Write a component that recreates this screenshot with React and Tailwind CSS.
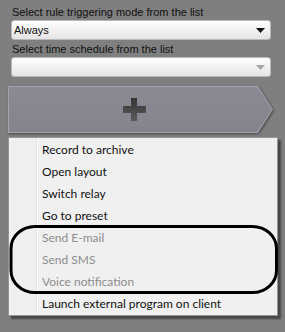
import React from "react";

const items = [
  { label: "Record to archive" },
  { label: "Open layout" },
  { label: "Switch relay" },
  { label: "Go to preset" },
  { label: "Send E-mail", disabled: true },
  { label: "Send SMS", disabled: true },
  { label: "Voice notification", disabled: true },
  { label: "Launch external program on client" },
];

const sans = { fontFamily: '"Liberation Sans", Arial, sans-serif' };

const Combo = ({ value, disabled }) => (
  <div className="mx-[11px] h-[20px] w-[260px] rounded-[3px] border border-[#b9b9b9] bg-gradient-to-b from-[#ffffff] to-[#e4e4e4] flex items-center pl-[2px] pr-[5px]">
    <span className="flex-1 text-[11px] leading-none text-[#111]" style={sans}>
      {value}
    </span>
    <svg width="9" height="5" viewBox="0 0 9 5">
      <polygon points="0,0 9,0 4.5,5" fill={disabled ? "#a8a8a8" : "#111"} />
    </svg>
  </div>
);

const App = () => {
  return (
    <div
      className="relative w-[285px] h-[332px] overflow-hidden bg-[#7f7f7f] pt-[4px]"
      style={{ fontFamily: 'Lato, "Open Sans", sans-serif' }}
    >
      <div className="pl-[12px] h-[16px] text-[11px] leading-[16px] text-[#111]" style={sans}>
        Select rule triggering mode from the list
      </div>
      <Combo value="Always" />
      <div className="mt-[1px] pl-[12px] h-[16px] text-[11px] leading-[16px] text-[#111]" style={sans}>
        Select time schedule from the list
      </div>
      <Combo value="" disabled />

      <div className="mt-[9px] ml-[8px] w-[265px] h-[47px] [filter:drop-shadow(1px_1px_1px_rgba(0,0,0,0.45))]">
        <div className="w-full h-full bg-[#a3a4ab] [clip-path:polygon(0_0,94.3%_0,100%_50%,94.3%_100%,0_100%)] p-[1px]">
          <div className="w-full h-full bg-gradient-to-b from-[#898a93] to-[#83848d] [clip-path:polygon(0_0,94.4%_0,100%_50%,94.4%_100%,0_100%)] flex items-center justify-center pr-[13px]">
            <svg width="23" height="23" viewBox="0 0 23 23">
              <defs>
                <linearGradient id="pl" x1="0" y1="0" x2="0" y2="1">
                  <stop offset="0" stopColor="#333" />
                  <stop offset="1" stopColor="#5c5c5c" />
                </linearGradient>
              </defs>
              <path d="M8 0h6v8h9v7h-9v8h-6v-8h-8v-7h8z" fill="url(#pl)" />
            </svg>
          </div>
        </div>
      </div>

      <div className="mt-[4px] ml-[8px] w-[270px] h-[179px] border border-[#979797] bg-[#f0f0f0] py-[1px] shadow-[3px_3px_2px_rgba(0,0,0,0.45)] relative">
        <div className="absolute left-[27px] top-0 bottom-0 w-[2px] border-l border-[#e2e2e2] border-r border-r-white" />
        {items.map((item, i) => (
          <div
            key={i}
            className={`relative h-[22px] pl-[33px] flex items-center text-[12px] ${
              item.disabled ? "text-[#8d8d8d]" : "text-[#111]"
            }`}
          >
            {item.label}
          </div>
        ))}
      </div>

      <svg
        className="absolute left-0 top-0 pointer-events-none"
        width="285"
        height="332"
        viewBox="0 0 285 332"
      >
        <rect
          x="11"
          y="226.5"
          width="265.5"
          height="66"
          rx="24"
          ry="22"
          fill="none"
          stroke="#000"
          strokeWidth="3"
        />
      </svg>
    </div>
  );
};

export default App;
